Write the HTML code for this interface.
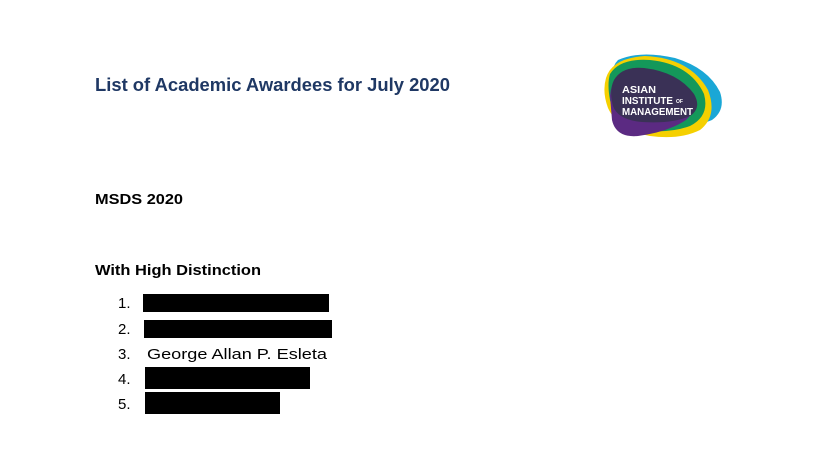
<!DOCTYPE html>
<html><head><meta charset="utf-8"><style>
html,body{margin:0;padding:0;background:#fff;width:814px;height:456px;overflow:hidden}
svg{display:block}
</style></head><body>
<svg width="814" height="456" viewBox="0 0 814 456" xmlns="http://www.w3.org/2000/svg" font-family="Liberation Sans, sans-serif">
<text x="95" y="91" font-size="18" font-weight="bold" fill="#1f3864" textLength="355" lengthAdjust="spacingAndGlyphs">List of Academic Awardees for July 2020</text>
<text x="95" y="204" font-size="15" font-weight="bold" fill="#000" textLength="88" lengthAdjust="spacingAndGlyphs">MSDS 2020</text>
<text x="95" y="275" font-size="15" font-weight="bold" fill="#000" textLength="166" lengthAdjust="spacingAndGlyphs">With High Distinction</text>
<g font-size="15" fill="#000">
<text x="118" y="308">1.</text>
<text x="118" y="334">2.</text>
<text x="118" y="359">3.</text>
<text x="118" y="384">4.</text>
<text x="118" y="409">5.</text>
<text x="147" y="359" textLength="180" lengthAdjust="spacingAndGlyphs">George Allan P. Esleta</text>
</g>
<rect x="143" y="294" width="186" height="18" fill="#000"/>
<rect x="144" y="320" width="188" height="18" fill="#000"/>
<rect x="145" y="367" width="165" height="22" fill="#000"/>
<rect x="145" y="392" width="135" height="22" fill="#000"/>
<g>
<path d="M618 60 Q640 50 675 58 Q708 68 720 92 Q726 110 712 120 Q695 128 665 122 Q630 112 616 90 Q608 70 618 60Z" fill="#1aa7d6"/>
<path d="M606 78 Q612 58 645 56 Q690 58 708 90 Q718 116 700 130 Q680 140 650 136 Q618 130 608 108 Q602 92 606 78Z" fill="#f5d000"/>
<path d="M610 74 Q620 58 650 60 Q690 64 704 94 Q710 116 690 126 Q668 134 640 130 Q614 122 610 100 Q607 84 610 74Z" fill="#14985a"/>
<path d="M610 96 Q612 72 634 68 Q668 68 688 92 Q698 110 686 120 Q668 132 638 136 Q616 138 612 120 Z" fill="#5b2a82"/>
<path d="M614 80 Q622 66 644 68 Q678 72 694 94 Q702 108 690 116 Q672 124 642 122 Q618 120 613 106 Q609 90 614 80Z" fill="#3a3156"/>
<g fill="#fff" font-weight="bold" font-size="10.5">
<text x="622" y="93" textLength="34" lengthAdjust="spacingAndGlyphs">ASIAN</text>
<text x="622" y="104" textLength="51" lengthAdjust="spacingAndGlyphs">INSTITUTE</text>
<text x="676" y="103" font-size="5">OF</text>
<text x="622" y="115" textLength="71" lengthAdjust="spacingAndGlyphs">MANAGEMENT</text>
</g>
</g>
</svg>
</body></html>
